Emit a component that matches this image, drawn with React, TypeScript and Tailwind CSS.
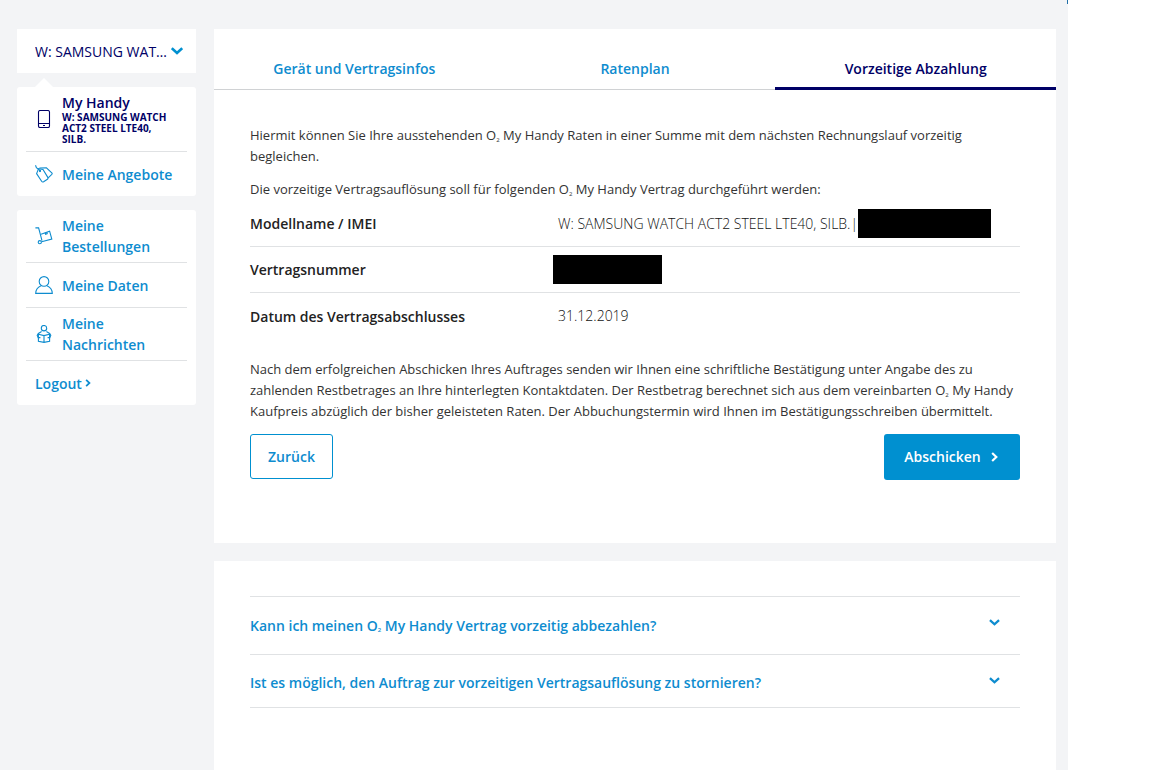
import { useState } from "react";
import type { ReactNode } from "react";

const O2 = () => (
  <>
    O<sub className="text-[6px] leading-none">2</sub>
  </>
);

const Chevron = ({ className }: { className: string }) => (
  <svg viewBox="0 0 12 8" fill="none" stroke="currentColor" strokeWidth="2.6" className={className} aria-hidden="true">
    <path d="M0.8 1.2 L6 6 L11.2 1.2" />
  </svg>
);

const ChevronRight = ({ className }: { className: string }) => (
  <svg viewBox="0 0 8 12" fill="none" stroke="currentColor" strokeWidth="2.6" className={className} aria-hidden="true">
    <path d="M1.2 1.2 L6.2 6 L1.2 10.8" />
  </svg>
);

const Icon = ({ children }: { children: ReactNode }) => (
  <svg viewBox="0 0 18 18" fill="none" stroke="currentColor" strokeWidth="1.1" className="size-[18px] shrink-0" aria-hidden="true">
    {children}
  </svg>
);

const PhoneIcon = () => (
  <Icon>
    <rect x="3.5" y="0.5" width="11" height="17" rx="1.6" />
    <path d="M3.5 13.5 H14.5 M8 15.5 H10" />
  </Icon>
);

const TagsIcon = () => (
  <Icon>
    <path d="M3.6 3.6 L1.6 8.6 L6.6 16.2 Q7.4 17.4 8.6 16.8 L12.4 14.2 Q13.4 13.4 12.8 12.4 L8 4.4 Z" />
    <path d="M4.4 3 L11.4 2.8 L16.8 7.8 Q17.6 8.6 16.8 9.4 L13.2 12.8" />
    <path d="M0.5 0.2 L1.4 2.6 L4.8 5.4" />
    <circle cx="5" cy="6" r="0.6" />
  </Icon>
);

const CartIcon = () => (
  <Icon>
    <path d="M0.4 0.9 H3.6 L7 13.6" />
    <circle cx="4.8" cy="15.2" r="1.6" />
    <path d="M6.6 14.8 L16.8 12 L14.6 4.2 L6 7.2" />
    <path d="M10 5.8 L10.6 7.2 L12.2 6.6 L11.8 5.2" />
  </Icon>
);

const UserIcon = () => (
  <Icon>
    <circle cx="9" cy="5.4" r="4.8" />
    <path d="M6 9.8 C2.4 11.4 0.8 13.8 0.7 17.4 H17.3 C17.2 13.8 15.6 11.4 12 9.8" />
  </Icon>
);

const ReaderIcon = () => (
  <Icon>
    <circle cx="9" cy="3.2" r="2.7" />
    <path d="M3.4 9.2 L9 10.6 L14.6 9.2 V16.4 L9 17.4 L3.4 16.4 Z M9 10.6 V17.4" />
    <path d="M6.6 6.6 L3.4 8.4 L2.2 10.2 L3.2 12.6 H5.4 M11.4 6.6 L14.6 8.4 L15.8 10.2 L14.8 12.6 H12.6" />
  </Icon>
);

const sideLink = "flex items-center gap-[9px] pl-[9px] font-semibold text-[#0e8ccf]";
const rowLabel = "p-0 pt-[2px] text-sm font-semibold text-[#222222]";

const tabs = ["Gerät und Vertragsinfos", "Ratenplan", "Vorzeitige Abzahlung"];

const Sidebar = () => (
  <aside className="w-[179px] shrink-0 text-sm leading-[21px]">
    <div className="relative bg-white text-[#000066]">
      <select
        aria-label="Vertrag auswählen"
        className="block h-11 w-full cursor-pointer appearance-none bg-white pt-[2px] pr-6 pl-[18px] text-sm font-normal"
      >
        <option>W: SAMSUNG WAT…</option>
      </select>
      <Chevron className="pointer-events-none absolute top-[18px] right-[13px] h-2 w-3 text-[#0090d0]" />
    </div>

    <svg viewBox="0 0 18 9" className="mt-[5px] ml-[18px] h-[9px] w-[18px] fill-white" aria-hidden="true">
      <path d="M0 9 L9 0 L18 9 Z" />
    </svg>

    <nav className="rounded-[3px] bg-white px-[9px]">
      <a href="#handy" className="flex h-[65px] items-center gap-[9px] border-b border-[#e0e2e4] pl-[9px] font-semibold text-[#000066]">
        <PhoneIcon />
        <span className="pt-[2px]">
          <span className="mb-px block leading-4">My Handy</span>
          <span className="block text-[10px] leading-[11px] font-bold">
            W: SAMSUNG WATCH
            <br />
            ACT2 STEEL LTE40,
            <br />
            SILB.
          </span>
        </span>
      </a>
      <a href="#angebote" className={`${sideLink} h-11`}>
        <TagsIcon />
        Meine Angebote
      </a>
    </nav>

    <nav className="mt-[14px] rounded-[3px] bg-white px-[9px]">
      <a href="#bestellungen" className={`${sideLink} h-[53px] border-b border-[#e0e2e4]`}>
        <CartIcon />
        <span>
          Meine
          <br />
          Bestellungen
        </span>
      </a>
      <a href="#daten" className={`${sideLink} h-[45px] border-b border-[#e0e2e4]`}>
        <UserIcon />
        Meine Daten
      </a>
      <a href="#nachrichten" className={`${sideLink} h-[53px] border-b border-[#e0e2e4]`}>
        <ReaderIcon />
        <span>
          Meine
          <br />
          Nachrichten
        </span>
      </a>
      <a href="#logout" className="flex h-11 items-center gap-[3px] pl-[9px] font-semibold text-[#0e8ccf]">
        Logout
        <ChevronRight className="h-2 w-[6px]" />
      </a>
    </nav>
  </aside>
);

const Contract = () => {
  const [active, setActive] = useState(2);

  return (
    <section className="bg-white pb-[63px]">
      <div role="tablist" className="grid grid-cols-3 pt-[18px]">
        {tabs.map((tab, i) => (
          <button
            key={tab}
            type="button"
            role="tab"
            aria-selected={active === i}
            onClick={() => setActive(i)}
            className={
              active === i
                ? "h-[43px] cursor-pointer border-b-3 border-[#000066] pt-1 text-sm font-semibold text-[#000066]"
                : "h-[43px] cursor-pointer border-b border-[#d0d2d4] pt-[2px] text-sm font-semibold text-[#0e8ccf]"
            }
          >
            {tab}
          </button>
        ))}
      </div>

      <div className="px-9 pt-[35px]">
        <p>
          Hiermit können Sie Ihre ausstehenden <O2 /> My Handy Raten in einer Summe mit dem nächsten Rechnungslauf vorzeitig
          <br />
          begleichen.
        </p>
        <p className="mt-3">
          Die vorzeitige Vertragsauflösung soll für folgenden <O2 /> My Handy Vertrag durchgeführt werden:
        </p>

        <table className="w-full table-fixed text-left">
          <tbody>
            <tr className="h-[46px] border-b border-[#e0e2e4]">
              <th scope="row" className={`${rowLabel} w-[303px]`}>Modellname / IMEI</th>
              <td className="p-0 pt-[2px]">
                <div className="flex items-center pl-[5px]">
                  <span className="flex w-[300px] justify-between text-sm font-light whitespace-nowrap text-[#111111]">
                    <span>W: SAMSUNG WATCH ACT2 STEEL LTE40, SILB.</span>
                    <span>|</span>
                  </span>
                  <span className="h-[29px] w-[133px] bg-black" />
                </div>
              </td>
            </tr>
            <tr className="h-[46px] border-b border-[#e0e2e4]">
              <th scope="row" className={rowLabel}>Vertragsnummer</th>
              <td className="p-0">
                <div className="h-[29px] w-[109px] bg-black" />
              </td>
            </tr>
            <tr className="h-[47px]">
              <th scope="row" className={rowLabel}>Datum des Vertragsabschlusses</th>
              <td className="py-0 pr-0 pl-[5px] text-sm font-light text-[#111111]">31.12.2019</td>
            </tr>
          </tbody>
        </table>

        <p className="mt-5">
          Nach dem erfolgreichen Abschicken Ihres Auftrages senden wir Ihnen eine schriftliche Bestätigung unter Angabe des zu
          <br />
          zahlenden Restbetrages an Ihre hinterlegten Kontaktdaten. Der Restbetrag berechnet sich aus dem vereinbarten <O2 /> My Handy
          <br />
          Kaufpreis abzüglich der bisher geleisteten Raten. Der Abbuchungstermin wird Ihnen im Bestätigungsschreiben übermittelt.
        </p>

        <div className="mt-3 flex items-start justify-between text-sm font-semibold">
          <button type="button" className="h-[45px] w-[83px] cursor-pointer rounded-[3px] border border-[#0090d0] text-[#0e8ccf]">
            Zurück
          </button>
          <button
            type="submit"
            className="flex h-[46px] w-[136px] cursor-pointer items-center justify-center gap-[10px] rounded-[3px] bg-[#0090d0] pr-[2px] text-white"
          >
            Abschicken
            <ChevronRight className="h-[10px] w-[7px]" />
          </button>
        </div>
      </div>
    </section>
  );
};

const Faq = () => (
  <section className="mt-[18px] grow bg-white px-9 pt-[35px] text-sm font-semibold text-[#0e8ccf]">
    <button
      type="button"
      className="flex h-[59px] w-full cursor-pointer items-center justify-between border-y border-[#e0e2e4] pr-5 text-left"
    >
      <span>
        Kann ich meinen <O2 /> My Handy Vertrag vorzeitig abbezahlen?
      </span>
      <Chevron className="mb-[6px] h-[7px] w-[11px]" />
    </button>
    <button
      type="button"
      className="flex h-[53px] w-full cursor-pointer items-center justify-between border-b border-[#e0e2e4] pt-1 pr-5 text-left"
    >
      Ist es möglich, den Auftrag zur vorzeitigen Vertragsauflösung zu stornieren?
      <Chevron className="mb-[6px] h-[7px] w-[11px]" />
    </button>
  </section>
);

const App = () => {
  return (
    <div className="min-h-screen bg-white pr-[84px] font-['Open_Sans','Noto_Sans',sans-serif] text-[13px] leading-[21px] text-[#333333]">
      <div className="relative flex min-h-screen gap-[18px] bg-[#f3f4f6] pt-[29px] pr-3 pl-[17px]">
        <span className="absolute top-0 right-0 h-1 w-px bg-[#1f6fa8]" />
        <Sidebar />
        <main className="flex min-w-0 grow flex-col">
          <Contract />
          <Faq />
        </main>
      </div>
    </div>
  );
};

export default App;
